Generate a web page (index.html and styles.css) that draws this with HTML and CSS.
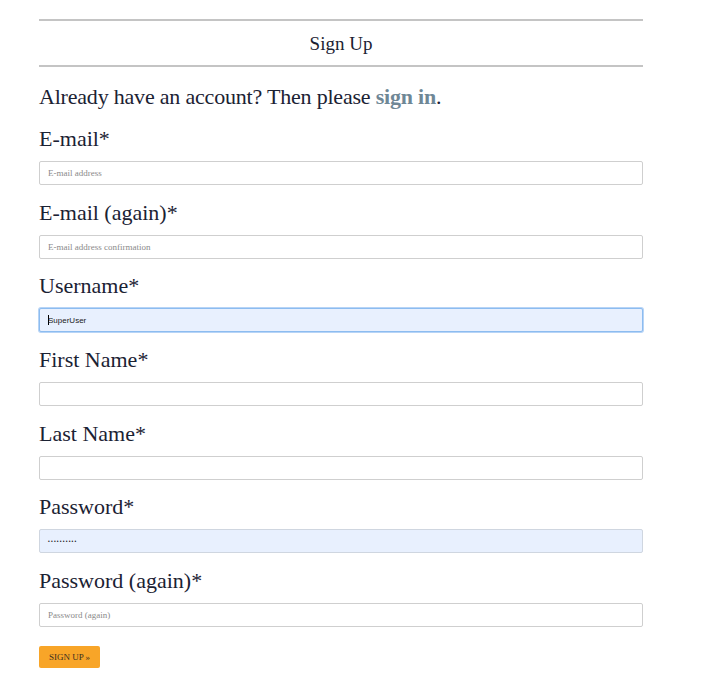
FILE: index.html
```html
<!DOCTYPE html>
<html>
<head>
<meta charset="utf-8">
<link rel="stylesheet" href="styles.css">
</head>
<body>
<main class="page">
  <h1 class="title">Sign Up</h1>
  <p class="intro">Already have an account? Then please <a href="#" class="link">sign in</a>.</p>
  <form class="form">
    <div class="field">
      <label class="label">E-mail*</label>
      <input class="input" type="text" placeholder="E-mail address">
    </div>
    <div class="field">
      <label class="label">E-mail (again)*</label>
      <input class="input" type="text" placeholder="E-mail address confirmation">
    </div>
    <div class="field">
      <label class="label">Username*</label>
      <div class="input input-focus"><span class="caret"></span>SuperUser</div>
    </div>
    <div class="field">
      <label class="label">First Name*</label>
      <input class="input" type="text">
    </div>
    <div class="field">
      <label class="label">Last Name*</label>
      <input class="input" type="text">
    </div>
    <div class="field">
      <label class="label">Password*</label>
      <div class="input input-auto"><span class="dots">••••••••••</span></div>
    </div>
    <div class="field">
      <label class="label">Password (again)*</label>
      <input class="input" type="password" placeholder="Password (again)">
    </div>
    <button class="btn" type="button">SIGN UP »</button>
  </form>
</main>
</body>
</html>
```
FILE: styles.css
```css
* { box-sizing: border-box; }
html, body { margin: 0; padding: 0; background: #fff; }
body {
  font-family: "Liberation Serif", "Times New Roman", serif;
  color: #1b2233;
}
.page {
  width: 604px;
  margin-left: 39px;
  padding-top: 19px;
}
.title {
  margin: 0;
  border-top: 2px solid #c4c4c4;
  border-bottom: 2px solid #c4c4c4;
  height: 48px;
  line-height: 46px;
  text-align: center;
  font-size: 19px;
  font-weight: normal;
}
.intro {
  margin: 10px 0 0 0;
  font-size: 22px;
  line-height: 40px;
  height: 40px;
  letter-spacing: -0.2px;
}
.link {
  color: #6f8796;
  font-weight: bold;
  text-decoration: none;
}
.form { display: flex; flex-direction: column; }
.field {
  display: flex;
  flex-direction: column;
  padding-top: 6px;
}
.field + .field { padding-top: 5.7px; }
.label {
  font-size: 22px;
  line-height: 32px;
  height: 32px;
  margin-bottom: 6px;
}
.input {
  display: flex;
  align-items: center;
  width: 604px;
  height: 24px;
  border: 1px solid #cfcfcf;
  border-radius: 2px;
  padding: 0 8px;
  font-family: "Liberation Serif", serif;
  font-size: 9px;
  color: #333;
  background: #fff;
  margin: 0 0 6px 0;
  outline: none;
}
.input::placeholder { color: #8a8a8a; }
.input-focus {
  background: #e8f0fe;
  border-color: #8cbcf0;
  box-shadow: 0 0 0 1px #b7d4f6;
  font-family: "Liberation Sans", Arial, sans-serif;
  font-size: 8px;
  color: #222;
}
.caret {
  display: inline-block;
  width: 1px;
  height: 10px;
  background: #000;
  margin-right: -1px;
}
.input-auto {
  background: #e8f0fe;
  border-color: #cfd6e0;
}
.dots {
  font-family: "Liberation Sans", sans-serif;
  font-size: 5px;
  letter-spacing: 1.2px;
  color: #222;
}
.btn {
  align-self: flex-start;
  margin-top: 13px;
  width: 61px;
  height: 22px;
  border: none;
  border-radius: 2px;
  background: #f8a528;
  color: #3b3020;
  font-family: "Liberation Serif", serif;
  font-size: 9px;
  padding: 0;
}
```
